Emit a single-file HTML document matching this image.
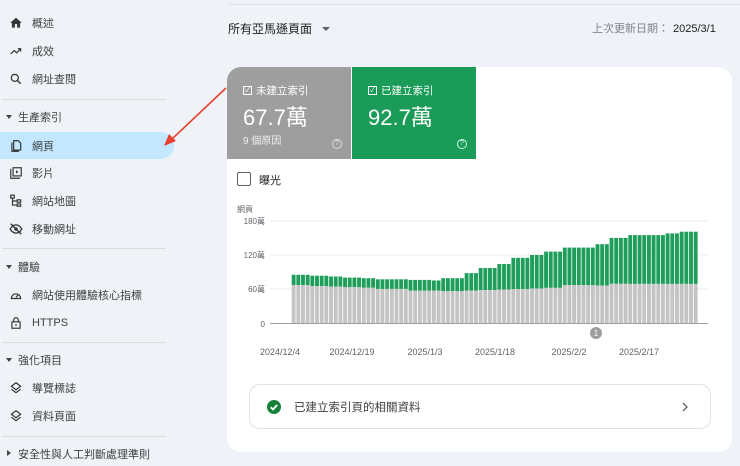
<!DOCTYPE html>
<html><head><meta charset="utf-8">
<style>
*{margin:0;padding:0;box-sizing:border-box}
body{width:740px;height:466px;overflow:hidden;background:#eff2f7;font-family:"Liberation Sans","Noto Sans CJK TC",sans-serif;color:#3c4043;position:relative}
.abs{position:absolute}
.nav{position:absolute;left:0;height:28px;width:174px;font-size:11px;display:flex;align-items:center}
.nav .ic{position:absolute;left:9px;width:14px;height:14px}
.nav .t{position:absolute;left:32px}
.sec{position:absolute;left:0;font-size:11px;display:flex;align-items:center;height:20px}
.sec .t{position:absolute;left:18px;white-space:nowrap}
.sec .tri{position:absolute;left:6px;width:0;height:0;border-left:3px solid transparent;border-right:3px solid transparent;border-top:4px solid #444}
.div{position:absolute;left:2px;width:164px;height:1px;background:#dadce0}
</style></head><body>
<div class="abs" style="left:228px;top:4px;width:512px;height:1px;background:#dfe3e8"></div>

<!-- sidebar -->
<div class="abs" style="left:0;top:132px;width:174px;height:27px;background:#c2e7ff;border-radius:0 14px 14px 0"></div>
<div class="nav" style="top:9px"><svg class="ic" viewBox="0 0 24 24"><path d="M10 20v-6h4v6h5v-8h3L12 3 2 12h3v8z" fill="#333"/></svg><span class="t">概述</span></div>
<div class="nav" style="top:37px"><svg class="ic" viewBox="0 0 24 24"><path d="M3 17l6-6 4 4 7-7M15 8h5v5" fill="none" stroke="#333" stroke-width="2"/></svg><span class="t">成效</span></div>
<div class="nav" style="top:65px"><svg class="ic" viewBox="0 0 24 24"><circle cx="10" cy="10" r="6" fill="none" stroke="#333" stroke-width="2.2"/><path d="M14.5 14.5L20 20" stroke="#333" stroke-width="2.5"/></svg><span class="t">網址查閱</span></div>
<div class="div" style="top:99px"></div>
<div class="sec" style="top:107px"><span class="tri"></span><span class="t">生產索引</span></div>
<div class="nav" style="top:132px"><svg class="ic" viewBox="0 0 24 24"><path d="M8 3h8l4 4v12H8zM5 6v15h12" fill="none" stroke="#333" stroke-width="2"/></svg><span class="t">網頁</span></div>
<div class="nav" style="top:159px"><svg class="ic" viewBox="0 0 24 24"><path d="M3 5v16h16" fill="none" stroke="#333" stroke-width="2"/><rect x="7" y="3" width="14" height="14" fill="none" stroke="#333" stroke-width="2"/><path d="M12 7v6l4-3z" fill="#333"/></svg><span class="t">影片</span></div>
<div class="nav" style="top:187px"><svg class="ic" viewBox="0 0 24 24"><rect x="3" y="2" width="6" height="5" fill="none" stroke="#333" stroke-width="2"/><rect x="14" y="10" width="6" height="4" fill="none" stroke="#333" stroke-width="2"/><rect x="14" y="17" width="6" height="4" fill="none" stroke="#333" stroke-width="2"/><path d="M6 7v12h8M6 12h8" fill="none" stroke="#333" stroke-width="2"/></svg><span class="t">網站地圖</span></div>
<div class="nav" style="top:215px"><svg class="ic" viewBox="0 0 24 24"><path d="M2 12c3-5 7-7 10-7s7 2 10 7c-3 5-7 7-10 7S5 17 2 12z" fill="none" stroke="#333" stroke-width="2.2"/><circle cx="12" cy="12" r="3" fill="#333"/><path d="M3 3l18 18" stroke="#333" stroke-width="2.2"/></svg><span class="t">移動網址</span></div>
<div class="div" style="top:248px"></div>
<div class="sec" style="top:257px"><span class="tri"></span><span class="t">體驗</span></div>
<div class="nav" style="top:281px"><svg class="ic" viewBox="0 0 24 24"><path d="M4 18a8 8 0 1 1 16 0z" fill="none" stroke="#333" stroke-width="2"/><path d="M12 16l4-5" stroke="#333" stroke-width="2"/></svg><span class="t">網站使用體驗核心指標</span></div>
<div class="nav" style="top:309px"><svg class="ic" viewBox="0 0 24 24"><rect x="5" y="10" width="14" height="11" fill="none" stroke="#333" stroke-width="2"/><path d="M8 10V7a4 4 0 0 1 8 0v3" fill="none" stroke="#333" stroke-width="2"/><circle cx="12" cy="15.5" r="1.5" fill="#333"/></svg><span class="t">HTTPS</span></div>
<div class="div" style="top:342px"></div>
<div class="sec" style="top:350px"><span class="tri"></span><span class="t">強化項目</span></div>
<div class="nav" style="top:374px"><svg class="ic" viewBox="0 0 24 24"><path d="M12 3l8 6-8 6-8-6z M4 14l8 6 8-6" fill="none" stroke="#333" stroke-width="2"/></svg><span class="t">導覽標誌</span></div>
<div class="nav" style="top:402px"><svg class="ic" viewBox="0 0 24 24"><path d="M12 3l8 6-8 6-8-6z M4 14l8 6 8-6" fill="none" stroke="#333" stroke-width="2"/></svg><span class="t">資料頁面</span></div>
<div class="div" style="top:436px"></div>
<div class="sec" style="top:444px"><span class="abs" style="left:7px;top:6px;border-top:3px solid transparent;border-bottom:3px solid transparent;border-left:4px solid #444"></span><span class="t">安全性與人工判斷處理準則</span></div>

<!-- header -->
<div class="abs" style="left:228px;top:20px;font-size:12px;color:#202124">所有亞馬遜頁面</div>
<div class="abs" style="left:322px;top:27px;border-left:4px solid transparent;border-right:4px solid transparent;border-top:4px solid #5f6368"></div>
<div class="abs" style="left:592px;top:20px;font-size:11px;color:#80868b">上次更新日期：<span style="color:#202124;margin-left:4px">2025/3/1</span></div>

<!-- card -->
<div class="abs" style="left:227px;top:67px;width:505px;height:385px;background:#fff;border-radius:14px;overflow:hidden">
  <div class="abs" style="left:0;top:0;width:124px;height:92px;background:#9e9e9e;color:#fff">
    <div class="abs" style="left:16px;top:16px;font-size:10.5px;display:flex;align-items:center"><span style="display:inline-block;width:9px;height:9px;border:1px solid #fff;margin-right:4px;font-size:7px;line-height:7px;text-align:center">✓</span>未建立索引</div>
    <div class="abs" style="left:16px;top:33px;font-size:22px">67.7萬</div>
    <div class="abs" style="left:16px;top:65px;font-size:10px;color:#eee">9 個原因</div>
    <div class="abs" style="left:105px;top:72px;width:10px;height:10px;border:1px solid #ddd;border-radius:50%;font-size:7px;line-height:8px;text-align:center;color:#ddd">?</div>
  </div>
  <div class="abs" style="left:125px;top:0;width:124px;height:92px;background:#1a9b57;color:#fff">
    <div class="abs" style="left:16px;top:16px;font-size:10.5px;display:flex;align-items:center"><span style="display:inline-block;width:9px;height:9px;border:1px solid #fff;margin-right:4px;font-size:7px;line-height:7px;text-align:center">✓</span>已建立索引</div>
    <div class="abs" style="left:16px;top:33px;font-size:22px">92.7萬</div>
    <div class="abs" style="left:105px;top:72px;width:10px;height:10px;border:1px solid #cfe;border-radius:50%;font-size:7px;line-height:8px;text-align:center;color:#cfe">?</div>
  </div>
  <div class="abs" style="left:10px;top:105px;width:14px;height:14px;border:1.5px solid #5f6368;border-radius:2px"></div>
  <div class="abs" style="left:32px;top:105px;font-size:11px;color:#202124">曝光</div>
  <div class="abs" style="left:22px;top:386px"></div>
</div>

<svg class="abs" style="left:0;top:0" width="740" height="466">
  <text x="237" y="212" font-size="8" fill="#5f6368" font-family="Liberation Sans,Noto Sans CJK TC,sans-serif">網頁</text>
  <g font-size="8" fill="#5f6368" font-family="Liberation Sans,Noto Sans CJK TC,sans-serif" text-anchor="end">
    <text x="265" y="224">180萬</text><text x="265" y="258">120萬</text><text x="265" y="292">60萬</text><text x="265" y="327">0</text>
  </g>
  <g stroke="#eeeeee"><line x1="270" y1="221" x2="708" y2="221"/><line x1="270" y1="255" x2="708" y2="255"/><line x1="270" y1="289" x2="708" y2="289"/></g>
  <g id="bars"></g>
  <line x1="270" y1="323.5" x2="708" y2="323.5" stroke="#9aa0a6"/>
  <circle cx="596" cy="333" r="6" fill="#9e9e9e"/><text x="596" y="336" font-size="8" fill="#fff" text-anchor="middle" font-family="Liberation Sans">1</text>
  <g font-size="9" fill="#5f6368" font-family="Liberation Sans" text-anchor="middle">
    <text x="280" y="355">2024/12/4</text><text x="352" y="355">2024/12/19</text><text x="425" y="355">2025/1/3</text><text x="495" y="355">2025/1/18</text><text x="569" y="355">2025/2/2</text><text x="639" y="355">2025/2/17</text>
  </g>
  <line x1="226" y1="88" x2="172" y2="139" stroke="#e5412d" stroke-width="1.6"/>
  <path d="M164 146l5-12 7 7z" fill="#e5412d"/>
</svg>

<div class="abs" style="left:249px;top:384px;width:462px;height:45px;border:1px solid #dfe1e5;border-radius:11px;background:#fff">
  <svg class="abs" style="left:17px;top:15px" width="14" height="14" viewBox="0 0 14 14"><circle cx="7" cy="7" r="7" fill="#188038"/><path d="M3.8 7.2l2.2 2.2 4.2-4.4" fill="none" stroke="#fff" stroke-width="1.8"/></svg>
  <div class="abs" style="left:44px;top:14px;font-size:11.5px;color:#3c4043">已建立索引頁的相關資料</div>
  <svg class="abs" style="left:431px;top:17px" width="8" height="10"><path d="M2 1l4 4-4 4" fill="none" stroke="#5f6368" stroke-width="1.3"/></svg>
</div>

<script>
var seg=[[240,85,67],[300,83.5,65],[340,82,64],[400,80,63],[440,79,62],[540,77,60],[600,76,57],[640,75,57],[700,79,56],[745,88,57],[800,97,58],[845,104,59],[900,115,60],[945,120,61],[1000,126,62],[1100,133,67],[1145,139,66],[1200,150,69],[1300,155,69],[1345,158,69],[1500,161,69]];
var g=document.getElementById('bars'),s='',n=87,w=406.7/n;
for(var i=0;i<n;i++){var zx=185+(i+0.5)*w*3,k=0;while(seg[k][0]<zx)k++;var t=seg[k][1],gr=seg[k][2];var x=291.7+i*w;
var yt=323-t*0.567,yg=323-gr*0.567;
s+='<rect x="'+x.toFixed(2)+'" y="'+yt.toFixed(1)+'" width="'+(w-0.8).toFixed(2)+'" height="'+(yg-yt).toFixed(1)+'" fill="#1e9e5a"/>';
s+='<rect x="'+x.toFixed(2)+'" y="'+yg.toFixed(1)+'" width="'+(w-0.8).toFixed(2)+'" height="'+(323-yg).toFixed(1)+'" fill="#c4c4c4"/>';}
g.innerHTML=s;
</script>
</body></html>
